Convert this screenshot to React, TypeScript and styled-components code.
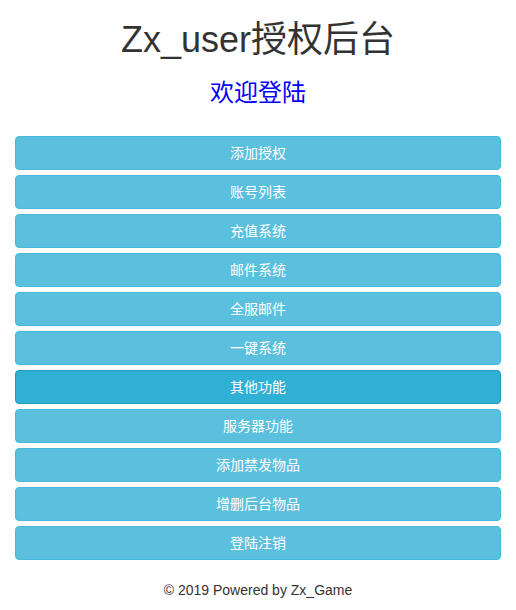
import React from "react";
import styled, { createGlobalStyle } from "styled-components";

const GlobalStyle = createGlobalStyle`
  html, body {
    margin: 0;
    padding: 0;
    background: #fff;
  }
  body {
    font-family: "Liberation Sans", Arial, "Noto Sans CJK SC", sans-serif;
    font-size: 14px;
    line-height: 1.428571;
    color: #333;
  }
  * { box-sizing: border-box; }
`;

const Page = styled.div`
  padding: 0 15px;
  display: flex;
  flex-direction: column;
`;

const Title = styled.h1`
  margin: 20px 0 0;
  font-size: 36px;
  font-weight: 400;
  line-height: 1.1;
  text-align: center;
  color: #333;
`;

const Subtitle = styled.h3`
  margin: 20px 0 0;
  font-size: 24px;
  font-weight: 400;
  line-height: 1.1;
  text-align: center;
  color: #0000ff;
`;

const Menu = styled.nav`
  margin-top: 30px;
  display: flex;
  flex-direction: column;
  gap: 5px;
`;

const MenuButton = styled.button<{ $active?: boolean }>`
  display: block;
  width: 100%;
  height: 34px;
  padding: 6px 12px;
  font-family: "Liberation Sans", Arial, "Noto Sans CJK SC", sans-serif;
  font-size: 14px;
  font-weight: 400;
  line-height: 20px;
  color: #fff;
  text-align: center;
  background: ${(p) => (p.$active ? "#31b0d5" : "#5bc0de")};
  border: 1px solid ${(p) => (p.$active ? "#269abc" : "#46b8da")};
  border-radius: 4px;
  cursor: pointer;
`;

const Footer = styled.footer`
  margin-top: 20px;
  text-align: center;
  font-size: 14px;
  line-height: 20px;
  color: #333;
`;

const items = [
  "添加授权",
  "账号列表",
  "充值系统",
  "邮件系统",
  "全服邮件",
  "一键系统",
  "其他功能",
  "服务器功能",
  "添加禁发物品",
  "增删后台物品",
  "登陆注销",
];

export default function App() {
  return (
    <>
      <GlobalStyle />
      <Page>
        <Title>Zx_user授权后台</Title>
        <Subtitle>欢迎登陆</Subtitle>
        <Menu>
          {items.map((label) => (
            <MenuButton key={label} $active={label === "其他功能"}>
              {label}
            </MenuButton>
          ))}
        </Menu>
        <Footer>© 2019 Powered by Zx_Game</Footer>
      </Page>
    </>
  );
}
